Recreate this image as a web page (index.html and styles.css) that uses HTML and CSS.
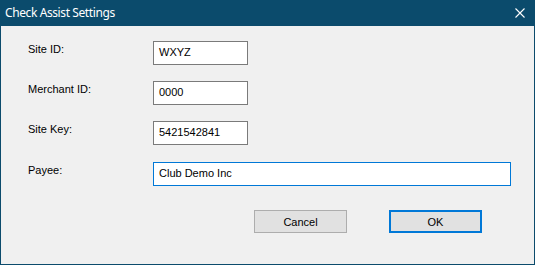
FILE: index.html
```html
<!DOCTYPE html>
<html>
<head>
<meta charset="utf-8">
<link rel="stylesheet" href="styles.css">
</head>
<body>
<div class="window">
  <div class="titlebar">
    <span class="title">Check Assist Settings</span>
    <svg class="close" width="10" height="10" viewBox="0 0 10 10"><path d="M0.5 0.5 L9.5 9.5 M9.5 0.5 L0.5 9.5" stroke="#fff" stroke-width="1.1" fill="none"/></svg>
  </div>
  <div class="content">
    <div class="form">
      <label class="label">Site ID:</label>
      <div class="field short">WXYZ</div>
      <label class="label">Merchant ID:</label>
      <div class="field short">0000</div>
      <label class="label">Site Key:</label>
      <div class="field short">5421542841</div>
      <label class="label payee-label">Payee:</label>
      <div class="field long focused">Club Demo Inc</div>
    </div>
    <div class="buttons">
      <div class="btn">Cancel</div>
      <div class="btn default">OK</div>
    </div>
  </div>
</div>
</body>
</html>
```
FILE: styles.css
```css
html, body {
  margin: 0;
  padding: 0;
  background: #f0f0f0;
}
.window {
  width: 535px;
  height: 265px;
  box-sizing: border-box;
  border: 1px solid #0b4b6c;
  border-top: none;
  background: #f0f0f0;
  font-family: "Liberation Sans", Arial, sans-serif;
  font-size: 11px;
  color: #000;
  display: flex;
  flex-direction: column;
}
.titlebar {
  height: 26px;
  background: #0b4b6c;
  margin: 0 -1px;
  display: flex;
  align-items: center;
  justify-content: space-between;
  padding: 0 10px 0 5px;
}
.title {
  color: #fff;
  font-family: "Noto Sans", "Open Sans", sans-serif;
  font-size: 12px;
  letter-spacing: -0.4px;
  line-height: 16px;
  margin-top: -1px;
}
.close {
  display: block;
}
.content {
  padding: 15px 0 0 27px;
}
.form {
  display: grid;
  grid-template-columns: 125px auto;
  row-gap: 16px;
  align-items: start;
}
.label {
  line-height: 13px;
  padding-top: 2px;
}
.field {
  height: 24px;
  box-sizing: border-box;
  border: 1px solid #7a7a7a;
  background: #fff;
  padding-left: 5px;
  line-height: 21px;
}
.short { width: 95px; }
.long { width: 358px; margin-top: 1px; }
.payee-label { margin-top: 1px; }
.focused { border-color: #0078d7; }
.buttons {
  display: flex;
  gap: 42px;
  margin-top: 24px;
  padding-left: 226px;
}
.btn {
  width: 93px;
  height: 23px;
  box-sizing: border-box;
  border: 1px solid #adadad;
  background: #e1e1e1;
  display: flex;
  align-items: center;
  justify-content: center;
}
.btn.default {
  border: 2px solid #0078d7;
}
```
